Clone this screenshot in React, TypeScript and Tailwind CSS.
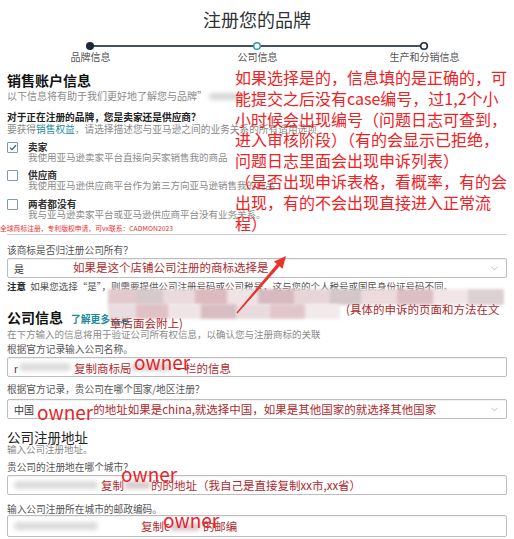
import { ChevronDown } from "lucide-react";
import type { ReactNode } from "react";

// Brand registry — step 2 "公司信息" form, with the red hand-written notes on top.

function Smudge({ className }: { className: string }) {
  return <span className={`inline-block rounded-full blur-[2px] ${className}`} />;
}

function Field({
  children,
  select,
  className = "",
}: {
  children?: ReactNode;
  select?: boolean;
  className?: string;
}) {
  return (
    <div
      className={`relative flex items-center rounded-[2px] border border-[#bdbdbd] bg-white px-[6px] shadow-[inset_0_1px_1px_rgba(0,0,0,0.06)] ${className}`}
    >
      {children}
      {select && <ChevronDown aria-hidden className="ml-auto size-[11px] text-[#a0a0a0]" strokeWidth={1.5} />}
    </div>
  );
}

function Owner({ className }: { className: string }) {
  return (
    <span className={`absolute text-[19px] leading-[19px] text-[#e8232a] ${className}`}>owner</span>
  );
}

function Option({ checked, title, desc, className = "" }: { checked?: boolean; title: string; desc: string; className?: string }) {
  return (
    <div className={`flex gap-[10px] ${className}`}>
      <span className="flex size-[11px] shrink-0 items-center justify-center rounded-[1px] border border-[#7f9aaa] bg-white">
        {checked && (
          <svg width="8" height="7" viewBox="0 0 8 7" aria-hidden>
            <polyline points="1,3.6 3,5.6 7,1.2" fill="none" stroke="#2f6684" strokeWidth="1.3" />
          </svg>
        )}
      </span>
      <div>
        <div className="text-[9.7px] font-semibold leading-[10px] text-[#333]">{title}</div>
        <div className="whitespace-nowrap text-[9.5px] leading-[10px] text-[#8a8a8a]">{desc}</div>
      </div>
    </div>
  );
}

export default function App() {
  const note = "whitespace-nowrap text-[11.5px] text-[#ad2a2e]";
  return (
    <div className="relative h-[539px] w-[514px] overflow-hidden bg-white font-['Noto_Sans_CJK_SC',sans-serif] text-[#333]">
      <h1 className="pt-[7px] text-center text-[18px] leading-[24px] text-[#2e3236]">注册您的品牌</h1>

      {/* stepper */}
      <svg className="mt-[10px] block" width="514" height="10" aria-hidden>
        <line x1="90" y1="5" x2="424" y2="5" stroke="#44525c" strokeWidth="2" />
        <circle cx="90" cy="5" r="4" fill="#1c2833" />
        <circle cx="257" cy="5" r="3.3" fill="#fff" stroke="#2a9cab" strokeWidth="1.5" />
        <circle cx="424" cy="5" r="3.3" fill="#fff" stroke="#1c2833" strokeWidth="1.6" />
      </svg>
      <div className="ml-[7px] grid w-[501px] grid-cols-3 text-center text-[10px] leading-[12px] text-[#555]">
        <span>品牌信息</span>
        <span>公司信息</span>
        <span>生产和分销信息</span>
      </div>

      <div className="px-[7px]">
        <h2 className="mt-[8px] text-[14px] font-bold leading-[18px] text-[#111]">销售账户信息</h2>
        <p className="flex items-center whitespace-nowrap text-[10px] leading-[14px] text-[#8a8a8a]">
          以下信息将有助于我们更好地了解您与品牌”
          <Smudge className="ml-[2px] h-[7px] w-[36px] bg-[#d6d6d6]" />
        </p>
        <p className="mt-[8px] text-[9.7px] font-bold leading-[12px] text-[#222]">
          对于正在注册的品牌，您是卖家还是供应商？
        </p>
        <p className="whitespace-nowrap text-[9.7px] leading-[12px] text-[#8a8a8a]">
          要获得<span className="text-[#1c8a99]">销售权益</span>，请选择描述您与亚马逊之间的业务关系的所有适用选项
        </p>

        <Option className="mt-[7px]" checked title="卖家" desc="我使用亚马逊卖家平台直接向买家销售我的商品" />
        <Option className="mt-[8px]" title="供应商" desc="我使用亚马逊供应商平台作为第三方向亚马逊销售我的商品" />
        <Option className="mt-[9px]" title="两者都没有" desc="我与亚马逊卖家平台或亚马逊供应商平台没有业务关系。" />

        <p className="-ml-[7px] mt-[5px] whitespace-nowrap text-[6.8px] leading-[8px] text-[#ee2a2a]">
          全球商标注册，专利版权申请，可vx联系：CADMON2023
        </p>
        <div className="mt-[2px] border-t border-[#cfcfcf]" />

        <p className="mt-[9px] text-[9.7px] leading-[12px] text-[#555]">该商标是否归注册公司所有？</p>
        <Field select className="mt-[2px] h-[20px]">
          <span className="text-[10px] text-[#333]">是</span>
          <span className={`ml-[49px] ${note}`}>如果是这个店铺公司注册的商标选择是</span>
        </Field>
        <p className="mt-[2px] whitespace-nowrap text-[9.5px] leading-[12px] text-[#555]">
          <b className="font-semibold text-[#222]">注意</b>&nbsp; 如果您选择“是”，则需要提供公司注册号码或公司税号，这与您的个人税号或国民身份证号码不同。
        </p>

        <div className="mt-[16px] flex items-baseline gap-[8px] leading-[18px]">
          <h2 className="text-[14px] font-bold text-[#111]">公司信息</h2>
          <span className="text-[9.8px] font-bold text-[#1c8a99]">了解更多信息</span>
        </div>
        <p className="whitespace-nowrap text-[9.5px] leading-[12px] text-[#8a8a8a]">
          在下方输入的信息将用于验证公司所有权信息，以确认您与注册商标的关联
        </p>

        <p className="mt-[3px] text-[9.7px] leading-[12px] text-[#555]">根据官方记录输入公司名称。</p>
        <Field className="mt-[2px] h-[20px]">
          <span className="pt-[3px] text-[10px] text-[#333]">r</span>
          <Smudge className="ml-[1px] h-[8px] w-[52px] bg-[#dcdcdc]" />
          <span className={`ml-[3px] pt-[3px] ${note}`}>复制商标局</span>
          <Smudge className="h-[8px] w-[40px] bg-[#dccfd1]" />
          <span className={`ml-[2px] pt-[3px] ${note}`}>一栏的信息</span>
          <Owner className="left-[126px] top-[-6px]" />
        </Field>

        <p className="mt-[6px] text-[9.7px] leading-[12px] text-[#555]">根据官方记录，贵公司在哪个国家/地区注册？</p>
        <Field select className="mt-[4px] h-[20px]">
          <span className="text-[10px] text-[#333]">中国</span>
          <span className="relative top-[2px] ml-[3px] text-[19px] leading-none text-[#e8232a]">owner</span>
          <span className={`pt-[1px] ${note}`}>的地址如果是china,就选择中国，如果是其他国家的就选择其他国家</span>
        </Field>

        <h3 className="mt-[11px] text-[13.5px] leading-[14px] text-[#222]">公司注册地址</h3>
        <p className="text-[9.5px] leading-[10px] text-[#8a8a8a]">输入公司注册地址。</p>

        <p className="mt-[7px] text-[9.7px] leading-[12px] text-[#555]">贵公司的注册地在哪个城市？</p>
        <Field className="mt-[2px] h-[20px]">
          <Smudge className="h-[8px] w-[84px] bg-[#dcdcdc]" />
          <span className={`ml-[3px] pt-[2px] ${note}`}>复制</span>
          <Smudge className="h-[8px] w-[27px] bg-[#d8cbcd]" />
          <span className={`pt-[2px] ${note}`}>的的地址（我自己是直接复制xx市,xx省）</span>
          <Owner className="left-[113px] top-[-12px]" />
        </Field>

        <p className="mt-[8px] text-[9.7px] leading-[12px] text-[#555]">输入公司注册所在城市的邮政编码。</p>
        <Field className="h-[22px] items-end pb-[1px]">
          <Smudge className="mb-[5px] h-[8px] w-[84px] bg-[#dcdcdc]" />
          <span className={`ml-[43px] ${note}`}>复制c</span>
          <Smudge className="mb-[4px] h-[8px] w-[30px] bg-[#d8cbcd]" />
          <span className={`ml-[3px] ${note}`}>的邮编</span>
          <Owner className="left-[155px] top-[-6px]" />
        </Field>
      </div>

      {/* pixelated redaction over the notice */}
      <div className="pointer-events-none absolute left-[108px] top-[289px] h-[16px] w-[396px] bg-[linear-gradient(90deg,#e2c9ce_0_7%,#d6c9cb_7%_14%,#eadadd_14%_22%,#ddb9c0_22%_30%,#efe3e5_30%_38%,#d7bac0_38%_47%,#e7d6d9_47%_56%,#d3c7c9_56%_64%,#ecdadd_64%_73%,#dcbfc5_73%_82%,#f0e6e7_82%_91%,#ddd0d2_91%_100%)] blur-[1.5px]" />
      <div className="pointer-events-none absolute left-[108px] top-[304px] h-[15px] w-[232px] bg-[linear-gradient(90deg,#eadddf_0_12%,#dfc1c6_12%_26%,#efe4e5_26%_40%,#d8bec2_40%_55%,#e9dbdd_55%_70%,#e1c7cb_70%_85%,#f2e9ea_85%_100%)] blur-[1.5px]" />
      <div className={`absolute left-[346px] top-[301px] leading-[16px] ${note}`}>(具体的申诉的页面和方法在文</div>
      <div className={`absolute left-[110px] top-[315px] leading-[16px] ${note}`}>章后面会附上)</div>

      {/* hand-written note */}
      <div className="pointer-events-none absolute left-[235px] top-[67px] whitespace-nowrap text-[16px] leading-[20.8px] text-[#f2201f]">
        如果选择是的，信息填的是正确的，可
        <br />
        能提交之后没有case编号，过1,2个小
        <br />
        小时候会出现编号（问题日志可查到，
        <br />
        进入审核阶段）（有的会显示已拒绝，
        <br />
        问题日志里面会出现申诉列表）
        <br />
        （是否出现申诉表格，看概率，有的会
        <br />
        出现，有的不会出现直接进入正常流
        <br />
        程）
      </div>

      <svg className="pointer-events-none absolute left-0 top-0" width="514" height="539" aria-hidden>
        <polygon
          points="237.5,313.4 279.6,266.3 282.5,268.8 286,256 274,261.4 276.8,263.9 236.5,312.6"
          fill="#e8342c"
        />
      </svg>
    </div>
  );
}
